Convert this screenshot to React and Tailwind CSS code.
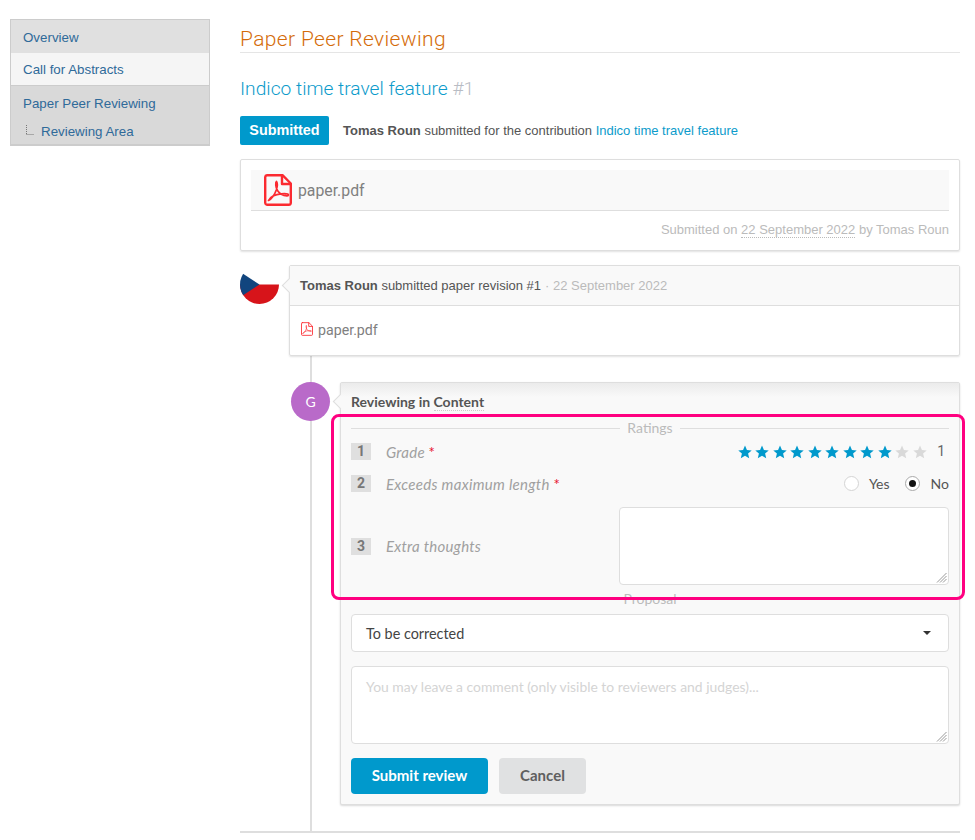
import React from "react";

const roboto = "font-['Roboto',sans-serif]";
const arial = "font-['Liberation_Sans',sans-serif]";
const muli = "font-['Lato',sans-serif]";

function PdfIcon({ className, stroke = 2.4 }) {
  return (
    <svg viewBox="0 0 28 32" className={className} fill="none" stroke="#fb2a30" strokeWidth={stroke} strokeLinejoin="round" strokeLinecap="round">
      <path d="M3 1.200h15.500L26.800 9.500V29a2 2 0 0 1-2 1.800H3a2 2 0 0 1-1.800-1.800V3A2 2 0 0 1 3 1.200z" />
      <path d="M18 1.500V10h8.500" />
      <path d="M4.500 26.500c3-1.500 6-5.500 7.800-10.500 1-3 1.200-7 .2-8.500-1.200 1-1 5.500 1 9 2 3.300 5 5 9.500 5.300 1.500 0 1.800-1.200.8-1.800-3-1-9.800-.2-14.800 2-2 1-3.700 2.800-4.500 4.500z" strokeWidth={stroke * 0.72} />
    </svg>
  );
}

function Star({ on }) {
  return (
    <svg viewBox="0 0 24 24" className="w-[14px] h-[14px] mr-[3.5px] shrink-0" fill={on ? "#0099cc" : "#d9d9d9"}>
      <path d="M12 1l3.300 7.500 8.200.8-6.200 5.400 1.900 8L12 18.500 4.800 22.700l1.900-8L.5 9.300l8.200-.8z" />
    </svg>
  );
}

function Resize() {
  return (
    <svg viewBox="0 0 11 11" className="absolute right-[1px] bottom-[1px] w-[11px] h-[11px]" stroke="#999" strokeWidth="1">
      <path d="M1 10.500L10.500 1M4 10.500L10.500 4M7 10.500L10.500 7" />
    </svg>
  );
}

function Legend({ children, className }) {
  return (
    <div className={`flex items-center gap-[7px] h-[14px] text-[14px] text-[#bbbbbb] ${muli} ${className}`}>
      <div className="flex-1 h-px bg-[#dedede]" />
      <span className="leading-none">{children}</span>
      <div className="flex-1 h-px bg-[#dedede]" />
    </div>
  );
}

function Num({ n }) {
  return (
    <span className={`w-5 h-[17px] bg-[#dfdfdf] text-[#777777] font-bold text-[14px] flex items-center justify-center ${roboto}`}>{n}</span>
  );
}

export default function App() {
  return (
    <div className="h-[840px] w-[975px] overflow-hidden bg-white flex items-start pt-[19px] pl-[10px]">
      {/* Sidebar */}
      <nav className={`w-[200px] border-x border-t border-b-2 border-[#cccccc] mr-[30px] text-[13.33px] text-[#2f6a99] ${arial}`}>
        <div className="h-[33px] bg-[#e0e0e0] pl-3 pt-[2px] flex items-center">Overview</div>
        <div className="h-[33px] bg-[#f5f5f5] pl-3 pt-[1px] flex items-center border-b border-[#cccccc]">Call for Abstracts</div>
        <div className="bg-[#d9d9d9] h-[58px]">
          <div className="h-[35px] pl-3 pt-[1px] flex items-center">Paper Peer Reviewing</div>
          <div className="pl-[15px] flex items-center h-[21px]">
            <svg width="8" height="10" viewBox="0 0 8 10" className="mr-[7px] mb-[3px]">
              <path d="M0.500 0v9M0.500 9.500h7" stroke="#777" strokeDasharray="1 1" fill="none" />
            </svg>
            Reviewing Area
          </div>
        </div>
      </nav>

      {/* Main */}
      <main className={`w-[720px] -mt-[19px] ${roboto}`}>
        <h1 className="h-[53px] pt-[25px] text-[21px] font-light leading-[28px] text-[#d46c0a] border-b border-[#e5e5e5] tracking-[0.35px]">Paper Peer Reviewing</h1>
        <h2 className="mt-[22px] h-[27px] text-[19.2px] font-light leading-[27px] text-[#0c9bcb]">
          Indico time travel feature <span className="text-[#b8bcc4]">#1</span>
        </h2>
        <div className="mt-[14px] flex items-center h-[29px]">
          <span className={`w-[89px] h-[29px] bg-[#0099cc] rounded-[2px] text-white font-bold text-[14.4px] flex items-center justify-center ${arial}`}>Submitted</span>
          <p className={`ml-[14px] text-[13px] text-[#555555] ${arial}`}>
            <b>Tomas Roun</b> submitted for the contribution <span className="text-[#0c9bcb]">Indico time travel feature</span>
          </p>
        </div>

        {/* File card */}
        <section className="mt-[14px] h-[92px] border border-[#dedede] rounded-[2px] shadow-[0_1px_2px_rgba(0,0,0,0.12)] px-[10px] pt-[10px]">
          <div className="h-[41px] bg-[#f9f9f9] border-b border-[#dedede] flex items-center pl-[13px]">
            <PdfIcon className="w-[28px] h-[32px] mr-[6px]" />
            <span className="text-[15.8px] pt-[2px] text-[#808080]">paper.pdf</span>
          </div>
          <p className={`mt-[9px] text-right text-[13px] text-[#bbbbbb] ${arial}`}>
            Submitted on <span className="border-b border-dotted border-[#bbbbbb]">22 September 2022</span> by Tomas Roun
          </p>
        </section>

        {/* Revision */}
        <section className="mt-[14px] flex items-start">
          <svg viewBox="0 0 40 40" className="w-[39px] h-[39px] shrink-0">
            <clipPath id="c"><circle cx="20" cy="20" r="20" /></clipPath>
            <g clipPath="url(#c)">
              <rect x="0" y="20" width="40" height="20" fill="#d7141a" />
              <path d="M20 20L0 7V33z" fill="#11457e" />
            </g>
          </svg>
          <div className="relative ml-[10px] w-[671px] h-[91px] border border-[#dedede] rounded-[2px] shadow-[0_1px_2px_rgba(0,0,0,0.12)]">
            <div className="absolute -left-[6px] top-[14px] w-[11px] h-[11px] rotate-45 bg-[#f9f9f9] border-l border-b border-[#dedede]" />
            <div className={`relative h-[40px] bg-[#f9f9f9] border-b border-[#dedede] pl-[10px] flex items-center text-[13px] text-[#555555] ${arial}`}>
              <span><b>Tomas Roun</b> submitted paper revision #1</span>
              <span className="text-[#bbbbbb] ml-[4px]">· 22 September 2022</span>
            </div>
            <div className="h-[49px] flex items-center pl-[11px] text-[14.2px] text-[#808080]">
              <PdfIcon className="w-[12px] h-[14px] mr-[5px] mb-[3px]" stroke={2} />
              <span>paper.pdf</span>
            </div>
          </div>
        </section>

        {/* Timeline */}
        <section className="ml-[70px] border-l-2 border-[#dedede] h-[475px] pt-[26px] flex items-start">
          <div className={`w-[39px] h-[39px] rounded-full bg-[#b96ac9] text-white text-[14px] flex items-center justify-center shrink-0 -ml-[21px] z-10 ${muli}`}>G</div>
          <div className={`relative ml-[10px] w-[620px] h-[423px] bg-[#f9f9f9] border border-[#dedede] rounded-[2px] shadow-[0_1px_2px_rgba(0,0,0,0.15)] px-[10px] ${muli}`}>
            <div className="absolute -left-[6px] top-[13px] w-[11px] h-[11px] rotate-45 bg-[#f9f9f9] border-l border-b border-[#dedede]" />
            <div className="absolute left-0 right-0 top-0 h-[14px] bg-gradient-to-b from-[#ebebeb] to-[#f9f9f9]" />
            <div className="relative pt-[8px] h-[38px] text-[14px] font-bold text-[#555555]">
              Reviewing in <span className="border-b border-dotted border-[#cccccc]">Content</span>
            </div>

            <Legend>Ratings</Legend>

            <div className="mt-[8px] h-[17px] flex items-center text-[15px] text-[#a0a0a0]">
              <Num n="1" />
              <span className="ml-[15px] pt-[1px] flex-1 italic tracking-[0.25px]">Grade <span className="text-[#e8112d] not-italic">*</span></span>
              <span className="flex items-center">
                {[1,1,1,1,1,1,1,1,1,0,0].map((on, i) => <Star key={i} on={!!on} />)}
                <span className={`ml-[7px] mr-[4px] text-[#666666] text-[14px] ${roboto}`}>1</span>
              </span>
            </div>

            <div className="mt-[15px] h-[17px] flex items-center text-[15px] text-[#a0a0a0]">
              <Num n="2" />
              <span className="ml-[15px] pt-[1px] flex-1 italic tracking-[0.3px]">Exceeds maximum length <span className="text-[#e8112d] not-italic">*</span></span>
              <span className="flex items-center text-[14px] text-[#555555]">
                <span className="w-[15px] h-[15px] rounded-full bg-white border border-[#d4d4d4]" />
                <span className="ml-[10px]">Yes</span>
                <span className="ml-[15px] w-[15px] h-[15px] rounded-full bg-white border border-[#aaaaaa] flex items-center justify-center">
                  <span className="w-[7px] h-[7px] rounded-full bg-[#111111]" />
                </span>
                <span className="ml-[11px]">No</span>
              </span>
            </div>

            <div className="mt-[15px] h-[78px] flex items-center text-[15px] text-[#a0a0a0]">
              <Num n="3" />
              <span className="ml-[15px] flex-1 italic tracking-[0.25px]">Extra thoughts</span>
              <div className="relative w-[330px] h-[78px] bg-white border border-[#dedede] rounded-[4px]"><Resize /></div>
            </div>

            <Legend className="mt-[7px]">Proposal</Legend>

            <div className="mt-[8px] h-[38px] bg-white border border-[#dedede] rounded-[4px] flex items-center justify-between pl-[14px] pr-[17px] text-[14.4px] text-[#444444]">
              <span className="pt-[1px]">To be corrected</span>
              <span className="w-0 h-0 border-x-[4px] border-x-transparent border-t-[4px] border-t-[#333333]" />
            </div>

            <div className="relative mt-[14px] h-[78px] bg-white border border-[#dedede] rounded-[4px] pl-[14px] pt-[10px] text-[13.9px] text-[#d4d4d4]">
              You may leave a comment (only visible to reviewers and judges)...
              <Resize />
            </div>

            <div className="mt-[14px] flex gap-[11px] text-[15px] font-bold">
              <button className="w-[137px] h-[36px] pb-[2px] bg-[#0099cc] text-white rounded-[4px]">Submit review</button>
              <button className="w-[87px] h-[36px] pb-[2px] bg-[#e0e1e2] text-[#5f5f5f] rounded-[4px]">Cancel</button>
            </div>
          </div>
        </section>
        <div className="h-[2px] bg-[#dedede]" />
      </main>

      {/* Highlight annotation */}
      <div className="absolute left-[331px] top-[414px] w-[634px] h-[186px] border-[3px] border-[#ff0080] rounded-[8px] pointer-events-none" />
    </div>
  );
}
